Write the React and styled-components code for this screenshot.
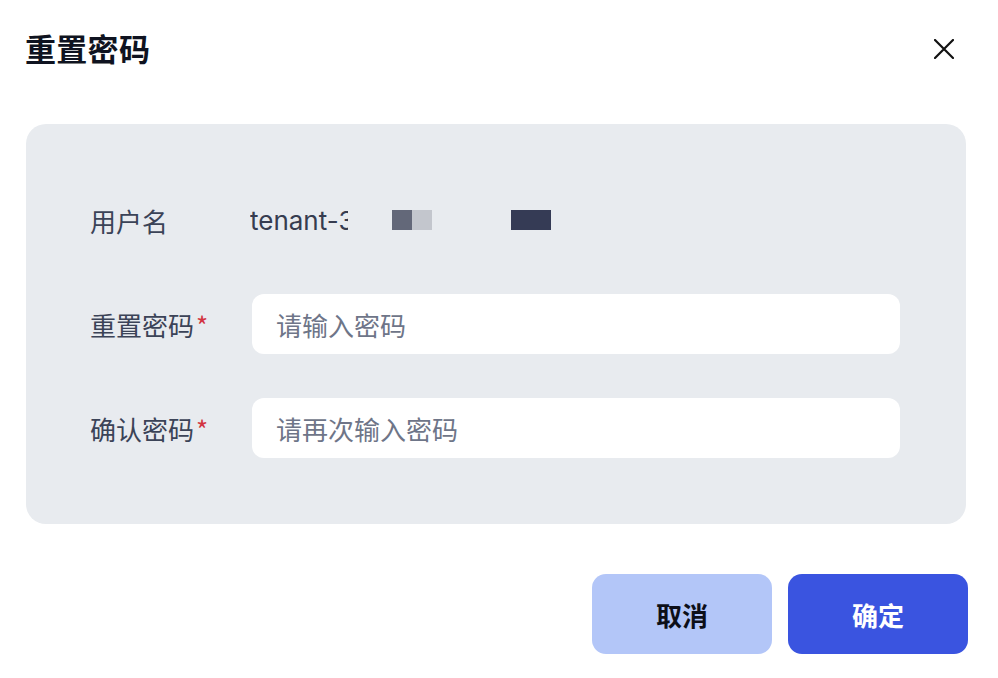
import React from "react";
import styled, { createGlobalStyle } from "styled-components";

const GlobalStyle = createGlobalStyle`
  html, body {
    margin: 0;
    padding: 0;
    background: #fff;
  }
  body {
    font-family: Inter, "Noto Sans CJK SC", sans-serif;
  }
`;

const Dialog = styled.div`
  width: 998px;
  height: 678px;
  box-sizing: border-box;
  padding: 0 30px 0 25px;
  display: flex;
  flex-direction: column;
`;

const Header = styled.div`
  height: 96px;
  display: flex;
  align-items: center;
  justify-content: space-between;
  padding-bottom: 2px;
  box-sizing: border-box;
`;

const Title = styled.h1`
  margin: 0;
  font-size: 31px;
  font-weight: 700;
  color: #0f1320;
  letter-spacing: 0.3px;
`;

const CloseButton = styled.button`
  border: 0;
  background: none;
  padding: 0;
  margin: 4px 13px 0 0;
  width: 22px;
  height: 22px;
  display: flex;
  align-items: center;
  justify-content: center;
  cursor: pointer;
`;

const Panel = styled.div`
  margin: 28px 0 0 1px;
  background: #e8ebef;
  border-radius: 20px;
  padding: 66px 66px 66px 64px;
  display: flex;
  flex-direction: column;
  gap: 44px;
  width: 940px;
  box-sizing: border-box;
`;

const Row = styled.div`
  display: flex;
  align-items: center;
  height: 60px;
`;

const Label = styled.div`
  width: 162px;
  flex-shrink: 0;
  font-size: 26px;
  color: #3b4357;
  font-family: "Noto Sans CJK SC", sans-serif;
`;

const Required = styled.span`
  color: #d23440;
  margin-left: 2px;
`;

const Value = styled.div`
  display: flex;
  align-items: center;
  font-size: 26px;
  color: #363c50;
  margin-left: -2px;
`;

const Clip = styled.span`
  display: inline-block;
  width: ${(p) => p.w}px;
  overflow: hidden;
  white-space: nowrap;
`;

const Mask = styled.span`
  display: inline-block;
  width: ${(p) => p.w}px;
  height: 20px;
  background: ${(p) => p.c};
  margin-left: ${(p) => p.ml || 0}px;
`;

const Input = styled.input`
  flex: 1;
  height: 60px;
  box-sizing: border-box;
  border: 0;
  outline: none;
  border-radius: 12px;
  background: #fff;
  padding: 0 24px;
  font-size: 26px;
  font-family: "Noto Sans CJK SC", sans-serif;
  color: #1f2433;
  &::placeholder {
    color: #6e7588;
  }
`;

const Footer = styled.div`
  margin-top: 50px;
  display: flex;
  justify-content: flex-end;
  gap: 16px;
  width: 943px;
`;

const Button = styled.button`
  width: 180px;
  height: 80px;
  border: 0;
  border-radius: 14px;
  font-size: 26px;
  font-weight: 700;
  font-family: "Noto Sans CJK SC", sans-serif;
  cursor: pointer;
  background: ${(p) => (p.primary ? "#3a54e0" : "#b3c6f8")};
  color: ${(p) => (p.primary ? "#fff" : "#0d0f18")};
`;

export default function App() {
  return (
    <>
      <GlobalStyle />
      <Dialog>
        <Header>
          <Title>重置密码</Title>
          <CloseButton aria-label="关闭">
            <svg width="20" height="20" viewBox="0 0 20 20">
              <path
                d="M1 1 L19 19 M19 1 L1 19"
                stroke="#111"
                strokeWidth="2.2"
                strokeLinecap="round"
              />
            </svg>
          </CloseButton>
        </Header>

        <Panel>
          <Row>
            <Label>用户名</Label>
            <Value>
              <Clip w={98}>tenant-3</Clip>
              <Mask w={20} c="#636879" ml={44} />
              <Mask w={20} c="#c3c6cd" />
              <Mask w={40} c="#353b55" ml={79} />
            </Value>
          </Row>
          <Row>
            <Label>
              重置密码<Required>*</Required>
            </Label>
            <Input type="password" placeholder="请输入密码" />
          </Row>
          <Row>
            <Label>
              确认密码<Required>*</Required>
            </Label>
            <Input type="password" placeholder="请再次输入密码" />
          </Row>
        </Panel>

        <Footer>
          <Button>取消</Button>
          <Button primary>确定</Button>
        </Footer>
      </Dialog>
    </>
  );
}
